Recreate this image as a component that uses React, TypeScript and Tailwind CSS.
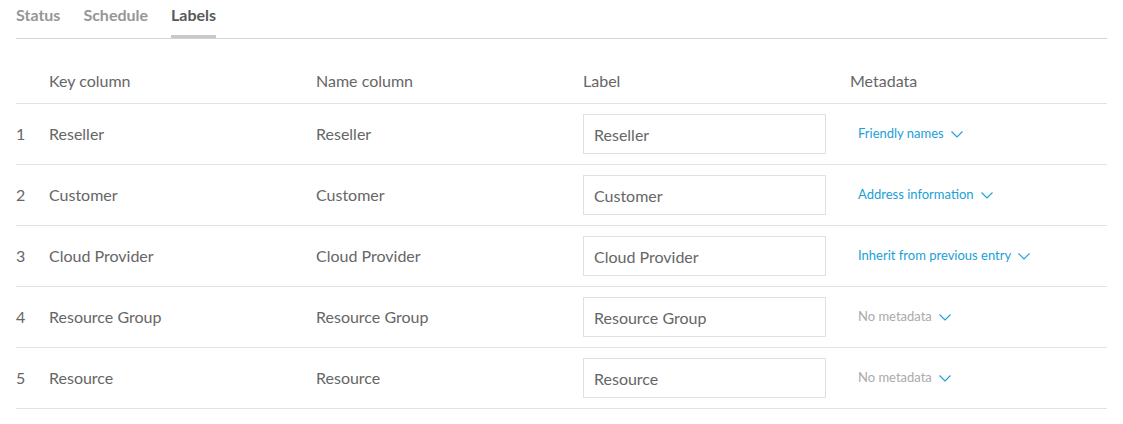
import { useState } from "react";

type Row = { key: string; name: string; meta: string; hasMeta: boolean };

const rows: Row[] = [
  { key: "Reseller", name: "Reseller", meta: "Friendly names", hasMeta: true },
  { key: "Customer", name: "Customer", meta: "Address information", hasMeta: true },
  { key: "Cloud Provider", name: "Cloud Provider", meta: "Inherit from previous entry", hasMeta: true },
  { key: "Resource Group", name: "Resource Group", meta: "No metadata", hasMeta: false },
  { key: "Resource", name: "Resource", meta: "No metadata", hasMeta: false },
];

function Chevron() {
  return (
    <svg width="12" height="7" viewBox="0 0 12 7" fill="none" className="ml-[7px]">
      <path d="M0.5 0.5 L6 6 L11.5 0.5" stroke="#1ba0d8" strokeWidth="1.1" />
    </svg>
  );
}

export default function App() {
  const [tab] = useState("Labels");
  const [labels, setLabels] = useState(rows.map((r) => r.key));

  return (
    <div className="min-h-[424px] bg-white px-4 font-['Lato','Open_Sans',sans-serif] text-[#666]">
      <div className="flex gap-[23px] border-b border-[#d4d4d4]">
        {["Status", "Schedule", "Labels"].map((t) => (
          <div
            key={t}
            className={`border-b-[3px] pt-[5px] pb-[10px] text-[16px] font-bold leading-[20px] ${
              t === tab ? "border-[#c8c8c8] text-[#5a5a5a]" : "border-transparent text-[#969696]"
            }`}
          >
            {t}
          </div>
        ))}
      </div>

      <div className="mt-[30px] grid grid-cols-[33px_267px_267px_267px_1fr] items-center border-b border-[#e2e2e2] pb-[10px] text-[16px] leading-[24px]">
        <div />
        <div>Key column</div>
        <div>Name column</div>
        <div>Label</div>
        <div>Metadata</div>
      </div>

      {rows.map((r, i) => (
        <div
          key={r.key}
          className="grid h-[61px] grid-cols-[33px_267px_267px_267px_1fr] items-center border-b border-[#e2e2e2] text-[16px]"
        >
          <div>{i + 1}</div>
          <div>{r.key}</div>
          <div>{r.name}</div>
          <div>
            <input
              value={labels[i]}
              onChange={(e) => setLabels(labels.map((l, j) => (j === i ? e.target.value : l)))}
              className="h-10 w-[243px] border border-[#e0e0e0] px-[10px] text-[16px] text-[#666] outline-none"
            />
          </div>
          <div className="flex items-center pl-2 text-[13px]">
            <span className={r.hasMeta ? "text-[#1ba0d8]" : "text-[#aaa]"}>{r.meta}</span>
            <Chevron />
          </div>
        </div>
      ))}
    </div>
  );
}
